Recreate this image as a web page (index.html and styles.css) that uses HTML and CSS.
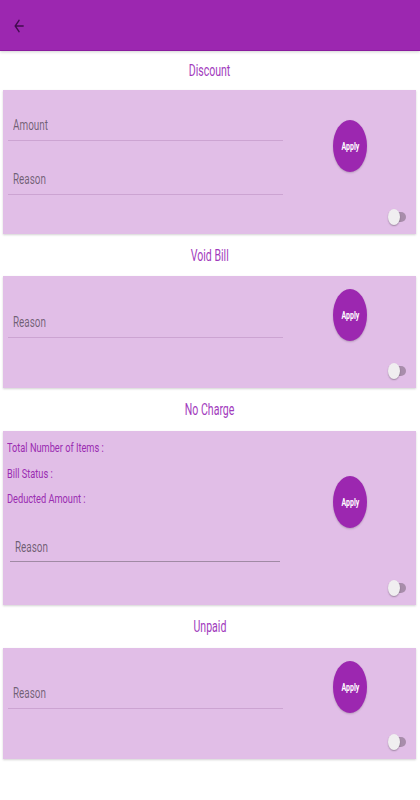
FILE: index.html
```html
<!DOCTYPE html>
<html>
<head>
<meta charset="utf-8">
<link rel="stylesheet" href="styles.css">
</head>
<body>
<header class="appbar">
  <svg class="back" viewBox="0 0 24 24" preserveAspectRatio="none"><path d="M20 11H7.83l5.59-5.59L12 4l-8 8 8 8 1.41-1.41L7.83 13H20v-2z"/></svg>
</header>

<div class="title title-first"><span class="sq">Discount</span></div>
<section class="card card-discount">
  <div class="fields">
    <div class="field f-amount"><span class="sq">Amount</span></div>
    <div class="field f-reason2"><span class="sq">Reason</span></div>
  </div>
  <div class="side">
    <button class="apply"><span class="sq">Apply</span></button>
    <span class="toggle"><span class="thumb"></span></span>
  </div>
</section>

<div class="title title-second"><span class="sq">Void Bill</span></div>
<section class="card card-void">
  <div class="fields">
    <div class="field f-single"><span class="sq">Reason</span></div>
  </div>
  <div class="side">
    <button class="apply"><span class="sq">Apply</span></button>
    <span class="toggle"><span class="thumb"></span></span>
  </div>
</section>

<div class="title"><span class="sq">No Charge</span></div>
<section class="card card-nocharge">
  <div class="fields">
    <div class="info"><span class="sq">Total Number of Items :</span></div>
    <div class="info"><span class="sq">Bill Status :</span></div>
    <div class="info"><span class="sq">Deducted Amount :</span></div>
    <div class="field field-active"><span class="sq">Reason</span></div>
  </div>
  <div class="side">
    <button class="apply"><span class="sq">Apply</span></button>
    <span class="toggle"><span class="thumb"></span></span>
  </div>
</section>

<div class="title"><span class="sq">Unpaid</span></div>
<section class="card card-unpaid">
  <div class="fields">
    <div class="field f-single f-unpaid"><span class="sq">Reason</span></div>
  </div>
  <div class="side">
    <button class="apply"><span class="sq">Apply</span></button>
    <span class="toggle"><span class="thumb"></span></span>
  </div>
</section>
</body>
</html>
```

FILE: styles.css
```css
* { box-sizing: border-box; }
html, body { margin: 0; padding: 0; background: #ffffff; }
body {
  width: 420px;
  height: 800px;
  overflow: hidden;
  font-family: Roboto, "Liberation Sans", sans-serif;
}

.sq {
  display: inline-block;
  transform: scaleX(0.66);
  transform-origin: left center;
  white-space: nowrap;
}

.appbar {
  height: 51px;
  background: #9c27b0;
  border-bottom: 1px solid #8a1c9e;
  box-shadow: 0 1px 3px rgba(0,0,0,0.18);
  display: flex;
  align-items: center;
  padding-left: 12px;
}
.back {
  width: 14px;
  height: 20px;
  margin-top: 1px;
  fill: rgba(30,0,40,0.72);
}

.title {
  height: 43px;
  display: flex;
  align-items: center;
  justify-content: center;
  color: #a23bbd;
  font-size: 16px;
}
.title .sq { transform-origin: center center; }
.title-first { height: 39px; }
.title-second { height: 42px; }

.card {
  margin: 0 4px 0 3px;
  background: #e1bee7;
  box-shadow: 0 1px 2px rgba(0,0,0,0.18);
  display: flex;
}
.card-discount { height: 144px; }
.card-void { height: 112px; }
.card-nocharge { height: 174px; }
.card-unpaid { height: 111px; }

.fields {
  width: 280px;
  padding-left: 4px;
  display: flex;
  flex-direction: column;
}

.field {
  margin-left: 1px;
  height: 26px;
  line-height: 20px;
  padding-left: 5px;
  border-bottom: 1px solid rgba(120,60,130,0.2);
  color: rgba(0,0,0,0.5);
  font-size: 15px;
}
.f-amount { margin-top: 25px; }
.f-reason2 { margin-top: 28px; }
.f-single { margin-top: 36px; }
.f-unpaid { margin-top: 35px; }

.info {
  line-height: 25.5px;
  color: #9a2cb1;
  font-size: 13px;
}
.info .sq { transform: scaleX(0.71); }
.info:first-child { margin-top: 4px; }

.field-active {
  margin-left: 3px;
  width: 270px;
  margin-top: 25px;
  height: 25px;
  border-bottom: 1.5px solid #a08aa4;
  color: rgba(0,0,0,0.52);
}

.side {
  flex: 1;
  display: flex;
  flex-direction: column;
  align-items: flex-start;
}

.apply {
  width: 34px;
  height: 52px;
  border-radius: 50%;
  border: none;
  padding: 0;
  margin-left: 50px;
  background: #9c27b0;
  color: #ffffff;
  font-family: Roboto, "Liberation Sans", sans-serif;
  font-weight: bold;
  font-size: 10.5px;
  display: flex;
  align-items: center;
  justify-content: center;
  box-shadow: 0 1px 2px rgba(0,0,0,0.2);
}
.apply .sq { transform-origin: center center; }
.card-discount .apply { margin-top: 30px; }
.card-void .apply { margin-top: 13px; }
.card-nocharge .apply { margin-top: 45px; }
.card-unpaid .apply { margin-top: 13px; }

.toggle {
  margin-top: auto;
  margin-bottom: 9px;
  align-self: flex-end;
  margin-right: 10px;
  width: 18px;
  height: 16px;
  display: flex;
  align-items: center;
  position: relative;
}
.toggle::before {
  content: "";
  position: absolute;
  left: 6px;
  right: 0;
  top: 3px;
  bottom: 3px;
  background: #a88dab;
  border-radius: 0 5px 5px 0;
}
.thumb {
  position: relative;
  width: 12px;
  height: 16px;
  border-radius: 50%;
  background: #f0eef0;
  box-shadow: 0 1px 1.5px rgba(0,0,0,0.3);
}
```
